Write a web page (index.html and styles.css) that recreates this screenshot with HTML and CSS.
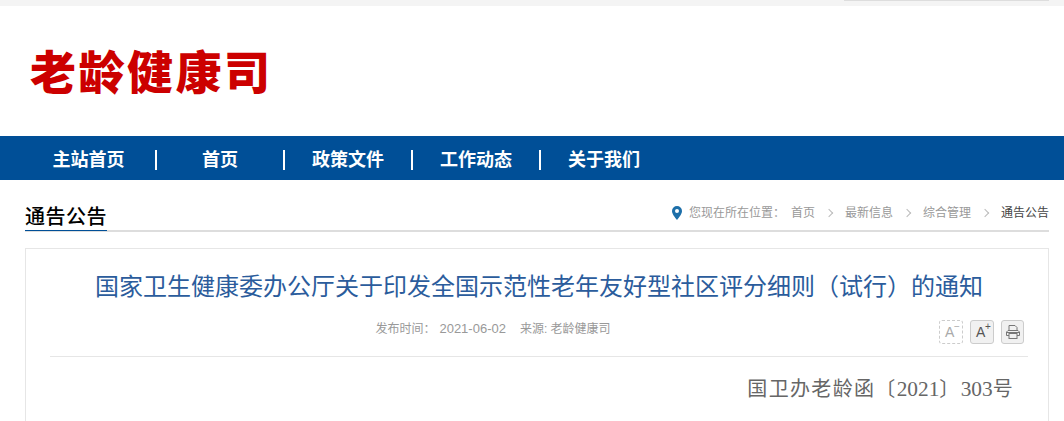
FILE: index.html
```html
<!DOCTYPE html>
<html>
<head>
    <title>老龄健康司</title>
    <link rel="stylesheet" href="styles.css">
</head>
<body>
    <div class="topbar"><div class="topbar-line"></div></div>

    <div class="header">
        <div class="logo">老龄健康司</div>
    </div>

    <div class="nav">
        <a class="nav-item nav-first">主站首页</a>
        <a class="nav-item">首页</a>
        <a class="nav-item">政策文件</a>
        <a class="nav-item">工作动态</a>
        <a class="nav-item nav-last">关于我们</a>
    </div>

    <div class="main">
        <div class="section-head">
            <div class="section-title">通告公告</div>
            <div class="crumbs">
                <svg class="pin" width="10" height="14" viewBox="0 0 10 14">
                    <path fill="#1d6fa9" fill-rule="evenodd" d="M5 0a5 5 0 0 1 5 5c0 3-3 6.500-5 9C3 11.500 0 8 0 5a5 5 0 0 1 5-5zm0 3a2 2 0 1 0 0 4 2 2 0 0 0 0-4z"/>
                </svg>
                <span class="crumb-label">您现在所在位置：</span>
                <span>首页</span>
                <span class="crumb-sep"></span>
                <span>最新信息</span>
                <span class="crumb-sep"></span>
                <span>综合管理</span>
                <span class="crumb-sep"></span>
                <span class="crumb-current">通告公告</span>
            </div>
        </div>

        <div class="article">
            <h1 class="article-title">国家卫生健康委办公厅关于印发全国示范性老年友好型社区评分细则（试行）的通知</h1>
            <div class="article-meta">
                <div class="meta-text">
                    <span class="meta-label">发布时间：</span><span class="meta-date">2021-06-02</span><span>来源: 老龄健康司</span>
                </div>
                <div class="tools">
                    <div class="tool tool-off"><span class="tool-a">A</span><span class="tool-mark">−</span></div>
                    <div class="tool"><span class="tool-a">A</span><span class="tool-mark">+</span></div>
                    <div class="tool tool-print">
                        <svg width="14" height="14" viewBox="0 0 14 14" fill="none" stroke="#777" stroke-width="1">
                            <path d="M3 5.500V.5h6L11 2.500v3"/>
                            <path d="M3 10.500H.5V7L2 5.500h10L13.500 7v3.500H11"/>
                            <rect x="3" y="8.500" width="8" height="5"/>
                            <path d="M1 7.500h12"/>
                        </svg>
                    </div>
                </div>
            </div>
            <div class="article-body">
                <p class="doc-no">国卫办老龄函〔<span class="doc-num">2021</span>〕<span class="doc-num">303</span>号</p>
            </div>
        </div>
    </div>
</body>
</html>
```

FILE: styles.css
```css
html, body { margin: 0; padding: 0; height: 421px; overflow: hidden; }
body { background: #fff; font-family: "Liberation Sans", "Noto Sans CJK SC", sans-serif; }

.topbar { height: 6px; background: #f4f4f4; display: flex; justify-content: flex-end; padding-right: 15px; }
.topbar-line { width: 205px; height: 1px; background: #ddd; }

.header { height: 130px; display: flex; align-items: center; padding-left: 30px; box-sizing: border-box; }
.logo { font-size: 46px; line-height: 48px; font-weight: 900; color: #cc0000; margin-top: 4px; letter-spacing: 2.500px; }

.nav { height: 44px; background: #004f97; display: flex; padding: 3px 0 0 25px; box-sizing: border-box; align-items: center; }
.nav-item { width: 128px; height: 20px; line-height: 20px; text-align: center; color: #fff; font-size: 18px; font-weight: 700; border-right: 2px solid #fff; box-sizing: border-box; }
.nav-first { width: 132px; padding-right: 3px; }
.nav-last { border-right: none; padding-right: 2px; }

.main { padding: 0 15px 0 25px; }

.section-head { height: 50px; border-bottom: 2px solid #ddd; display: flex; justify-content: space-between; align-items: flex-end; }
.section-title { font-size: 20px; line-height: 24px; font-weight: 500; color: #000; padding-bottom: 1px; border-bottom: 1px solid #004f97; margin-bottom: -1px; letter-spacing: 0.500px; }
.crumbs { display: flex; align-items: center; font-size: 12px; line-height: 16px; color: #999; padding-bottom: 9px; }
.pin { margin-right: 7px; }
.crumb-label { margin-right: 6px; }
.crumb-sep { width: 5px; height: 5px; border-top: 1px solid #bbb; border-right: 1px solid #bbb; transform: rotate(45deg); margin: 0 13px 0 11px; }
.crumb-current { color: #444; }

.article { margin-top: 16px; border: 1px solid #e6e6e6; height: 300px; padding: 0 20px 0 24px; }
.article-title { margin: 20px 0 0; font-size: 24px; line-height: 36px; font-weight: 400; color: #2b5c9c; text-align: center; }
.article-meta { height: 44px; margin-top: 7px; border-bottom: 1px solid #e6e6e6; display: flex; font-size: 12px; color: #999; }
.meta-text { flex: 1; text-align: center; line-height: 30px; padding-top: 2px; }
.meta-label { margin-right: 4px; }
.meta-date { font-size: 13px; margin-right: 14px; }
.tools { width: 92px; padding: 8px 4px 0 0; box-sizing: border-box; display: flex; justify-content: flex-end; gap: 7px; }
.tool { width: 24px; height: 24px; box-sizing: border-box; border: 1px solid #ccc; border-radius: 3px; background: #f1f1f1; display: flex; padding: 4px 0 0 5px; color: #555; font-size: 14px; line-height: 1; }
.tool-a { width: 9px; height: 14px; }
.tool-mark { font-size: 10px; line-height: 8px; margin-top: -2px; }
.tool-off { background: #fff; border: 1px dashed #ccc; color: #aaa; }
.tool-print { width: 23px; padding: 4px 0 0 4px; }

.article-body { padding-top: 16px; }
.doc-no { margin: 0; text-align: right; padding-right: 14px; font-family: "Liberation Serif", "Noto Sans CJK SC", serif; font-size: 20px; line-height: 32px; color: #666; letter-spacing: 1.330px; }
.doc-num { font-size: 21.330px; letter-spacing: 0; }
```
